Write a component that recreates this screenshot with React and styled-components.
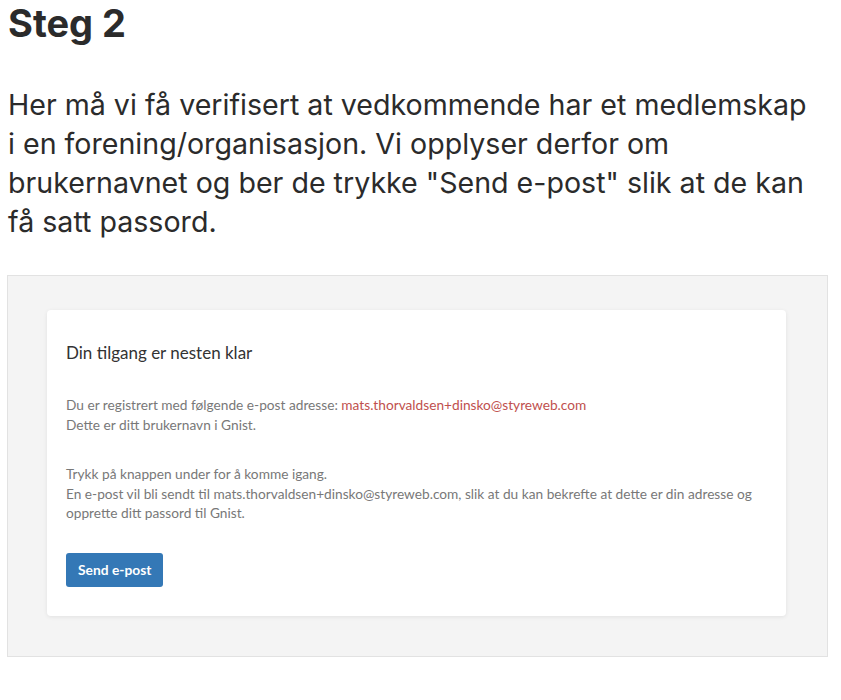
import React from 'react';
import styled, { createGlobalStyle } from 'styled-components';

const GlobalStyle = createGlobalStyle`
  body {
    margin: 0;
    background: #fff;
    font-family: Inter, "Noto Sans", sans-serif;
    color: #2b2b2b;
  }
`;

const Page = styled.div`
  padding: 0 8px;
  width: 836px;
  box-sizing: border-box;
`;

const Heading = styled.h2`
  margin: 0;
  padding-top: 1px;
  font-size: 38px;
  line-height: 44px;
  font-weight: 700;
  color: #2b2b2b;
`;

const Lead = styled.p`
  margin: 40px 0 0;
  max-width: 812px;
  font-size: 28.6px;
  line-height: 39px;
  font-weight: 400;
  color: #2b2b2b;
`;

const Preview = styled.div`
  margin-top: 34px;
  margin-left: -1px;
  width: 821px;
  box-sizing: border-box;
  background: #f4f4f4;
  border: 1px solid #e2e2e2;
  padding: 34px 41px 40px 39px;
`;

const Card = styled.div`
  background: #fff;
  border-radius: 4px;
  box-shadow: 0 1px 4px rgba(0, 0, 0, 0.08);
  padding: 32px 19px 29px;
  font-family: Lato, "Open Sans", sans-serif;
`;

const CardTitle = styled.h3`
  margin: 0;
  font-size: 17px;
  line-height: 22px;
  font-weight: 400;
  color: #333;
`;

const Text = styled.p`
  margin: ${p => p.$top}px 0 0;
  font-size: 13.7px;
  line-height: 19.5px;
  color: #787878;
`;

const Email = styled.span`
  color: #c0504e;
`;

const Button = styled.button`
  margin-top: 30px;
  display: inline-flex;
  align-items: center;
  justify-content: center;
  height: 34px;
  padding: 0 12px;
  border: none;
  border-radius: 3px;
  background: #3478b6;
  color: #fff;
  font-family: Lato, "Open Sans", sans-serif;
  font-size: 13.8px;
  font-weight: 700;
  cursor: pointer;
`;

export default function App() {
  return (
    <>
      <GlobalStyle />
      <Page>
        <Heading>Steg 2</Heading>
        <Lead>
          Her må vi få verifisert at vedkommende har et medlemskap i en
          forening/organisasjon. Vi opplyser derfor om brukernavnet og ber de
          trykke "Send e-post" slik at de kan få satt passord.
        </Lead>
        <Preview>
          <Card>
            <CardTitle>Din tilgang er nesten klar</CardTitle>
            <Text $top={31}>
              Du er registrert med følgende e-post adresse:{' '}
              <Email>mats.thorvaldsen+dinsko@styreweb.com</Email>
              <br />
              Dette er ditt brukernavn i Gnist.
            </Text>
            <Text $top={30}>
              Trykk på knappen under for å komme igang.
              <br />
              En e-post vil bli sendt til mats.thorvaldsen+dinsko@styreweb.com,
              slik at du kan bekrefte at dette er din adresse og opprette ditt
              passord til Gnist.
            </Text>
            <Button>Send e-post</Button>
          </Card>
        </Preview>
      </Page>
    </>
  );
}
